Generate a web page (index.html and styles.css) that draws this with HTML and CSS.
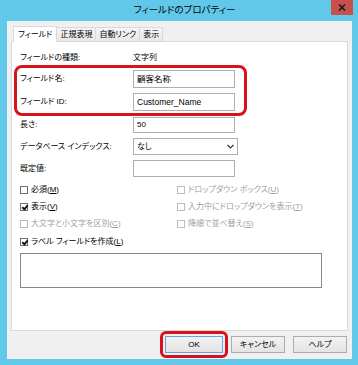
FILE: index.html
```html
<!DOCTYPE HTML>
<html lang="ja">
  <head>
    <title>フィールドのプロパティー</title>
    <meta charset="utf-8">
    <link rel="stylesheet" href="styles.css">
  </head>
  <body>

  <div class="window">
    <div class="titlebar">
      <span class="title">フィールドのプロパティー</span>
      <span class="close">
        <svg width="8" height="7" viewBox="0 0 8 7"><path d="M1 0.5 L7 6.5 M7 0.5 L1 6.5" stroke="#1a1a1a" stroke-width="1.6"/></svg>
      </span>
    </div>

    <div class="client">
      <div class="tabs">
        <span class="tab active">フィールド</span>
        <span class="tab">正規表現</span>
        <span class="tab">自動リンク</span>
        <span class="tab">表示</span>
      </div>

      <div class="panel">
        <div class="row type">
          <span class="label">フィールドの種類:</span>
          <span class="value">文字列</span>
        </div>

        <div class="highlight">
          <div class="row tall">
            <span class="label">フィールド名:</span>
            <span class="input">顧客名称</span>
          </div>
          <div class="row tall">
            <span class="label">フィールド ID:</span>
            <span class="input">Customer_Name</span>
          </div>
        </div>

        <div class="row length">
          <span class="label">長さ:</span>
          <span class="input">50</span>
        </div>
        <div class="row">
          <span class="label">データベース インデックス:</span>
          <span class="input select">なし
            <svg width="7" height="5" viewBox="0 0 7 5"><path d="M0.5 1 L3.5 4 L6.5 1" fill="none" stroke="#333" stroke-width="1.2"/></svg>
          </span>
        </div>
        <div class="row">
          <span class="label">既定値:</span>
          <span class="input"></span>
        </div>

        <div class="checks">
          <span class="check"><i class="box"></i>必須(<u>M</u>)</span>
          <span class="check off"><i class="box"></i>ドロップダウン ボックス(<u>U</u>)</span>
          <span class="check"><i class="box on"></i>表示(<u>V</u>)</span>
          <span class="check off"><i class="box"></i>入力中にドロップダウンを表示(<u>T</u>)</span>
          <span class="check off"><i class="box"></i>大文字と小文字を区別(<u>C</u>)</span>
          <span class="check off"><i class="box"></i>降順で並べ替え(<u>S</u>)</span>
        </div>

        <div class="check label-check"><i class="box on"></i>ラベル フィールドを作成(<u>L</u>)</div>

        <div class="memo"></div>
      </div>

      <div class="buttons">
        <span class="ok-mark"><span class="button default">OK</span></span>
        <span class="button">キャンセル</span>
        <span class="button">ヘルプ</span>
      </div>
    </div>
  </div>

  </body>
</html>
```

FILE: styles.css
```css
html {
  height: 100%;
}
body {
  margin: 0;
  padding: 0;
  background: #ffffff;
  color: #000000;
  font-family: "Liberation Sans", "Noto Sans CJK JP", sans-serif;
  font-size: 8px;
  line-height: 10px;
  font-feature-settings: "palt";
}

.window {
  width: 358px;
  height: 365px;
  box-sizing: border-box;
  background: #62c8ea;
  padding: 0 6px 6px 7px;
  display: flex;
  flex-direction: column;
}

.titlebar {
  height: 21px;
  position: relative;
  display: flex;
  justify-content: center;
  align-items: center;
}
.title {
  font-size: 9.5px;
  margin-left: 10px;
  margin-top: -1px;
}
.close {
  position: absolute;
  top: 0;
  right: -1px;
  width: 22px;
  height: 15px;
  background: #c7504a;
  display: flex;
  justify-content: center;
  align-items: center;
}

.client {
  flex: 1;
  background: #f0f0f0;
  display: flex;
  flex-direction: column;
  padding: 0 4px 0 4px;
}

/* tabs */
.tabs {
  height: 20px;
  display: flex;
  align-items: flex-end;
  padding-left: 2px;
}
.tab {
  height: 13px;
  line-height: 13px;
  padding: 0 3px;
  border: 1px solid #d9d9d9;
  border-bottom: none;
  background: linear-gradient(#f5f5f5, #e8e8e8);
  margin-left: -1px;
  white-space: nowrap;
}
.tab.active {
  height: 15px;
  line-height: 15px;
  background: #ffffff;
  margin-left: 0;
  margin-bottom: -1px;
  position: relative;
  z-index: 1;
  padding: 0 4px;
}

/* panel */
.panel {
  height: 290px;
  box-sizing: border-box;
  background: #ffffff;
  border: 1px solid #d9d9d9;
  padding: 10px 8px 0 8px;
  display: flex;
  flex-direction: column;
}

.row {
  display: grid;
  grid-template-columns: 113px 102px;
  align-items: center;
  height: 17px;
  margin-top: 5px;
  white-space: nowrap;
}
.row.type {
  height: 12px;
  margin-top: 0;
}
.row.tall {
  height: 18px;
  margin-top: 0;
}
.row.tall + .row.tall {
  margin-top: 5px;
}
.row.length {
  margin-top: 1px;
  height: 16px;
}

.input {
  height: 100%;
  box-sizing: border-box;
  border: 1px solid #abadb3;
  padding: 0 3px;
  display: flex;
  align-items: center;
  background: #ffffff;
}
.row.tall .input {
  font-size: 8.5px;
}
.select {
  justify-content: space-between;
  width: 105px;
}

.highlight {
  margin: 1px 0 0 -6px;
  width: 221px;
  border: 3px solid #d8121b;
  border-radius: 8px;
  padding: 2px 3px;
}

/* check boxes */
.checks {
  display: grid;
  grid-template-columns: 157px 1fr;
  grid-auto-rows: 17px;
  margin-top: 4px;
}
.check {
  display: flex;
  align-items: center;
  white-space: nowrap;
}
.check.off {
  color: #a0a0a0;
}
.box {
  width: 8px;
  height: 8px;
  border: 1px solid #707070;
  background: #ffffff;
  margin-right: 3px;
  box-sizing: border-box;
  position: relative;
}
.off .box {
  border-color: #bcbcbc;
}
.box.on::after {
  content: "";
  position: absolute;
  left: 2px;
  top: 0;
  width: 2px;
  height: 4px;
  border: solid #1a1a1a;
  border-width: 0 2px 2px 0;
  transform: rotate(40deg);
}
.label-check {
  height: 14px;
  margin-top: 3px;
}

.memo {
  width: 302px;
  height: 35px;
  box-sizing: border-box;
  border: 1px solid #828790;
  margin-top: 4px;
}

/* bottom buttons */
.buttons {
  height: 27px;
  display: flex;
  justify-content: flex-end;
  align-items: center;
  padding-right: 1px;
}
.button {
  width: 54px;
  height: 17px;
  box-sizing: border-box;
  border: 1px solid #acacac;
  background: linear-gradient(#f2f2f2, #e4e4e4);
  display: flex;
  justify-content: center;
  align-items: center;
  margin-left: 8px;
}
.button.default {
  width: 58px;
  margin-left: 0;
  border-color: #5fa7e4;
}
.ok-mark {
  border: 3px solid #d8121b;
  border-radius: 6px;
  padding: 2px;
  margin-right: -5px;
}
```
